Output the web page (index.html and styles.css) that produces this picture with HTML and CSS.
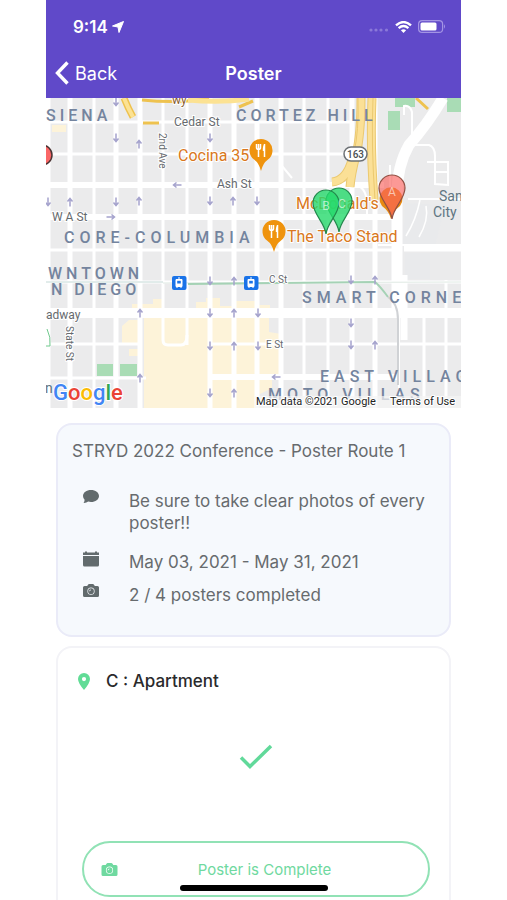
FILE: index.html
```html
<!DOCTYPE html>
<html lang="en">
<head>
<meta charset="utf-8">
<meta name="viewport" content="width=device-width, initial-scale=1">
<title>Poster</title>
<link rel="stylesheet" href="styles.css">
</head>
<body>
<svg class="defs" aria-hidden="true">
  <symbol id="camera" viewBox="0 0 16 13">
    <path fill="currentColor" fill-rule="evenodd" d="M1.5 2H4.2L5 .7Q5.4 0 6.200 0H9.800Q10.600 0 11 .7L11.800 2H14.500Q16 2 16 3.500V11.500Q16 13 14.500 13H1.500Q0 13 0 11.500V3.500Q0 2 1.500 2ZM8 3.600A3.600 3.600 0 1 0 8 10.800A3.600 3.600 0 1 0 8 3.600ZM8 4.300A2.900 2.900 0 1 1 8 10.100A2.900 2.900 0 1 1 8 4.300ZM8 5.400A1.800 1.800 0 0 0 6.200 7.200H7A1 1 0 0 1 8 6.200Z"/>
  </symbol>
</svg>
<div class="phone">
  <header class="top">
    <div class="status">
      <span class="time">9:14</span>
      <svg class="location" viewBox="0 0 12 12"><path d="M11.500.5 7 11.500 6 6 .5 5Z" fill="#fff" stroke="#fff" stroke-linejoin="round"/></svg>
      <span class="signals">
        <svg width="20" height="12" viewBox="0 0 20 12" fill="#8b79d9"><circle cx="2" cy="9" r="1.600"/><circle cx="7" cy="9" r="1.600"/><circle cx="12" cy="9" r="1.600"/><circle cx="17.500" cy="9" r="1.600"/></svg>
        <svg width="17" height="12" viewBox="0 0 17 12" fill="none" stroke="#fff" stroke-width="2.400"><path d="M1 4.400Q8.500-2.200 16 4.400M3.600 7.200Q8.500 3 13.400 7.200"/><path d="M8.500 12 5.900 9.200Q8.500 7.200 11.100 9.200Z" fill="#fff" stroke="none"/></svg>
        <svg width="28" height="13" viewBox="0 0 28 13"><rect x=".6" y=".6" width="24" height="11.800" rx="3.500" fill="none" stroke="#a394e4" stroke-width="1.200"/><rect x="2.500" y="2.500" width="16" height="8" rx="1.500" fill="#fff"/><path d="M26 4.300Q28 6.500 26 8.700Z" fill="#a394e4"/></svg>
      </span>
    </div>
    <nav class="bar">
      <a class="back" href="#"><svg width="14" height="24" viewBox="0 0 14 24"><path d="M12.500 1.500 2.500 12 12.500 22.500" fill="none" stroke="#fff" stroke-width="3.400"/></svg>Back</a>
      <h1>Poster</h1>
    </nav>
  </header>

  <svg class="map" viewBox="46 98 415 310" role="img" aria-label="Map of downtown San Diego">
    <defs>
      <path id="up" d="M0 4.500V-3M-2.500-.5 0-3.500 2.500-.5"/>
      <g id="food">
        <path d="M0 17Q-2 9-7 5.500A11.500 11.500 0 1 1 7 5.500Q2 9 0 17Z" fill="#ef930d"/>
        <path d="M-4.500-10V-6.500Q-4.500-4.500-2.500-4.500V3M-2.500-10V-5M-.5-10V-6.500Q-.5-4.500-2.500-4.500M3.500-10V3" fill="none" stroke="#fff" stroke-width="1.500"/>
        <path d="M3.500-10Q1.500-8 1.800-3H3.500Z" fill="#fff"/>
      </g>
      <path id="pin" d="M0 19C-1 8-13-1-13-12A13 13 0 1 1 13-12C13-1 1 8 0 19Z"/>
      <g id="tram">
        <rect x="-7" y="-7" width="14.500" height="14" rx="2" fill="#1a73e8"/>
        <path d="M-3-3.500H3V3.500H-3ZM-1-5H1M-2.500 5 -1 3.500M2.500 5 1 3.500" fill="#fff" stroke="#fff"/>
        <path d="M-1.800-2.200H1.800V.5H-1.800Z" fill="#1a73e8"/>
      </g>
    </defs>
    <rect x="46" y="98" width="415" height="310" fill="#ebebec"/>
    <g fill="#fdf3d9">
      <path d="M52 125H66V132H52ZM132 306V304H153V299H163V308H132ZM196 306V302H206V298H220V306H233V301H255V305H270V309H196ZM122 326 129 320H138V344H122ZM129 349H138V356H129ZM144 318H256V408H144ZM258 318H269V332L281 334V375H272V388L258 395Z"/>
      <path d="M164 309H187V340H164ZM187 349V390H190V408H150V349Z"/>
    </g>
    <g fill="#a9dcb5">
      <path d="M97 364H113V376H97ZM120 364H137V376H120ZM388 111H400V130H388ZM395 98H415V107H395ZM447 98H461V112H447Z"/>
    </g>
    <path d="M405 203 445 205 435 246H403ZM405 253H430V279H405Z" fill="#e9eaec"/>
    <g fill="none" stroke="#fff">
      <g stroke-width="5">
        <path d="M48 98V408M70 98V408M116 98V408M140 98V408M210 98V408M234 98V408M257 98V408M281 98V408M352 98V408M375 98V408"/>
      </g>
      <g stroke-width="3">
        <path d="M94 98V408M163 98V340M187 98V345M304 98V408M328 98V408M424 312V408M446 280V408M46 154H355M46 250H400M46 282H461M46 344H142M210 344H461M46 378H146M46 122H350"/>
      </g>
      <g stroke-width="6">
        <path d="M46 185H384M46 217H395M208 377H400"/>
      </g>
      <path d="M46 313H461" stroke-width="10"/>
      <path d="M404 248H461M404 275V340" stroke-width="7"/>
      <path d="M163 340Q163 345 168 345H181Q187 345 187 335" stroke-width="3"/>
      <path d="M443 98Q427 125 409 145Q397 166 397 195V310" stroke-width="11"/>
      <path d="M399 310V408M282 166 292 178M408 199H461M415 145H429Q435 147 435 156V184L448 185V162H427M435 172H448M404 115V106Q410 105 412 112V135M320 184H350Q367 184 367 205V217M390 165V188M378 245H461" stroke-width="2"/>
      <path d="M420 200Q416 220 406 236M426 206Q429 220 419 237" stroke-width="1.500"/>
    </g>
    <g fill="none" stroke="#ebc970" stroke-width="9">
      <path d="M361 98Q361 135 356 155T350 187M332 182Q346 181 352 160M372 98Q370 145 374 200"/>
    </g>
    <g fill="none" stroke="#fbe096" stroke-width="7">
      <path d="M361 98Q361 135 356 155T350 187M332 182Q346 181 352 160M372 98Q370 145 374 200"/>
    </g>
    <path d="M358 98Q359 132 354 152M373 98Q371 145 375 200" fill="none" stroke="#ebc970"/>
    <g fill="none" stroke="#eec24f">
      <path d="M124 98Q128 108 133 117" stroke-width="7"/>
      <path d="M124 98Q128 108 133 117" stroke="#fce293" stroke-width="4"/>
      <path d="M143 123H159M142 100Q180 104 209 98M239 107 253 101M416 98 428 109" stroke-width="3"/>
      <path d="M188 100Q220 103 249 99" stroke="#fce293" stroke-width="5"/>
    </g>
    <path d="M46 282H163" stroke="#c4d9d6"/>
    <path d="M163 283 461 282" stroke="#dfe9e3"/>
    <path d="M188 284 375 282Q380 286 388 297" fill="none" stroke="#a5d2b5" stroke-width="2"/>
    <path d="M388 297Q398 303 398 320V385" fill="none" stroke="#d0d2d5" stroke-width="2"/>
    <path d="M46 346H50Q51 337 47 329" fill="none" stroke="#70c98d"/>

    <g fill="none" stroke="#a5a3cd" stroke-width="1.500">
      <use href="#up" x="70" y="202"/><use href="#up" x="139" y="144"/><use href="#up" x="139" y="201"/><use href="#up" x="233" y="201"/>
      <use href="#up" x="140" y="313"/><use href="#up" x="140" y="378"/><use href="#up" x="234" y="281"/><use href="#up" x="234" y="313"/><use href="#up" x="234" y="346"/><use href="#up" x="234" y="393"/><use href="#up" x="375" y="280"/><use href="#up" x="375" y="345"/>
      <g transform="rotate(180)">
        <use href="#up" x="-48" y="-202"/><use href="#up" x="-116" y="-102"/><use href="#up" x="-116" y="-138"/><use href="#up" x="-116" y="-202"/><use href="#up" x="-210" y="-138"/><use href="#up" x="-210" y="-201"/><use href="#up" x="-257" y="-201"/><use href="#up" x="-210" y="-281"/><use href="#up" x="-210" y="-313"/><use href="#up" x="-210" y="-346"/><use href="#up" x="-210" y="-393"/><use href="#up" x="-258" y="-313"/><use href="#up" x="-258" y="-346"/><use href="#up" x="-351" y="-280"/><use href="#up" x="-351" y="-323"/><use href="#up" x="-351" y="-345"/>
      </g>
      <use href="#up" transform="translate(111 217) rotate(90)"/>
      <use href="#up" transform="translate(177 185) rotate(-90)"/>
      <use href="#up" transform="translate(276 377) rotate(-90)"/>
    </g>

    <g class="district">
      <text x="46" y="121">SIENA</text>
      <text x="236" y="121">CORTEZ HILL</text>
      <text class="wide" x="64" y="243">CORE-COLUMBIA</text>
      <text x="48" y="279">WNTOWN</text>
      <text x="51" y="295">N DIEGO</text>
      <text class="wide" x="302" y="303">SMART CORNE</text>
      <text class="wide" x="320" y="382">EAST VILLAG</text>
      <text class="wide" x="268" y="400">MOTO VILLAS</text>
    </g>
    <g class="street">
      <text x="174" y="126">Cedar St</text>
      <text x="217" y="188">Ash St</text>
      <text x="52" y="221">W A St</text>
      <text x="46" y="319">adway</text>
      <text x="172" y="104" class="highway">wy</text>
      <text class="small" x="269" y="283">C St</text>
      <text class="small" x="266" y="348">E St</text>
      <text class="small" transform="translate(159 133) rotate(90)">2nd Ave</text>
      <text class="small" transform="translate(66 326) rotate(90)">State St</text>
    </g>
    <g class="city"><text x="439" y="201">San</text><text x="433" y="217">City</text><text x="45" y="393">n</text></g>
    <g class="place">
      <text x="178" y="161">Cocina 35</text>
      <text x="296" y="209">McDonald's</text>
      <text x="287" y="242">The Taco Stand</text>
    </g>
    <rect x="344" y="147" width="23" height="14" rx="7" fill="#fff" stroke="#6c7074" stroke-width="1.500"/>
    <text class="shield" x="355.500" y="158">163</text>
    <use href="#tram" x="179" y="283"/><use href="#tram" x="251" y="283"/>
    <use href="#food" x="261" y="154"/>
    <use href="#food" x="274" y="235"/>
    <path d="M391 219Q389 211 382 206A11.500 11.500 0 1 1 400 206Q393 211 391 219Z" fill="#e88a10"/>
    <circle cx="42" cy="155" r="10" fill="#fa6767" stroke="#4b3434" stroke-width="1.500"/>
    <g stroke-width="1.200">
      <use href="#pin" x="339" y="213" fill="#25da6b" fill-opacity=".8" stroke="#22884c"/>
      <use href="#pin" x="326" y="215" fill="#25da6b" fill-opacity=".8" stroke="#22884c"/>
      <use href="#pin" x="392" y="200" fill="#fb625e" fill-opacity=".65" stroke="#925043"/>
    </g>
    <g class="pin-letter"><text x="326" y="210">B</text><text x="342" y="208">C</text><text x="392" y="196">A</text></g>
    <text class="google" x="53" y="400"><tspan fill="#4285f4">G</tspan><tspan fill="#ea4335">o</tspan><tspan fill="#fbbc05">o</tspan><tspan fill="#4285f4">g</tspan><tspan fill="#34a853">l</tspan><tspan fill="#ea4335">e</tspan></text>
    <rect x="255" y="396" width="206" height="12" fill="#f5f5f5" fill-opacity=".7"/>
    <text class="credit" x="256" y="405">Map data ©2021 Google</text>
    <text class="credit" x="390" y="405">Terms of Use</text>
  </svg>

  <main class="content">
    <section class="card summary">
      <h2>STRYD 2022 Conference - Poster Route 1</h2>
      <ul class="details">
        <li class="note">
          <svg width="16" height="14" viewBox="0 0 16 14" fill="currentColor"><path d="M8 0C12.500 0 16 2.600 16 6S12.500 12 8 12Q6.500 12 5.200 11.600Q3.500 13 1 13Q.4 12.900.8 12.400Q1.600 11.500 1.600 9.700Q0 8 0 6C0 2.600 3.500 0 8 0Z"/></svg>
          <span>Be sure to take clear photos of every poster!!</span>
        </li>
        <li>
          <svg width="16" height="16" viewBox="0 0 16 16" fill="currentColor"><path d="M0 1.500H2V.5H4V1.500H12V.5H14V1.500H16V4H0ZM0 5H16V14Q16 15.500 14.500 15.500H1.500Q0 15.500 0 14Z"/></svg>
          <span>May 03, 2021 - May 31, 2021</span>
        </li>
        <li>
          <svg width="16" height="13"><use href="#camera"/></svg>
          <span>2 / 4 posters completed</span>
        </li>
      </ul>
    </section>
    <section class="card stop">
      <h2><svg width="12" height="17" viewBox="0 0 12 17"><path d="M6 0A6 6 0 0 1 12 6Q12 10 6 17Q0 10 0 6A6 6 0 0 1 6 0ZM6 4A2.100 2.100 0 1 0 6 8.200A2.100 2.100 0 1 0 6 4Z" fill="#61dc96" fill-rule="evenodd"/></svg>C : Apartment</h2>
      <svg class="check" width="34" height="26" viewBox="0 0 34 26"><path d="M2 13.500 11 22.500 32 2" fill="none" stroke="#61d99a" stroke-width="3.500"/></svg>
      <button class="complete" type="button"><svg width="17" height="13"><use href="#camera"/></svg><span>Poster is Complete</span></button>
    </section>
  </main>
  <div class="home-indicator"></div>
</div>
</body>
</html>
```
FILE: styles.css
```css
* {
  box-sizing: border-box;
}

body {
  margin: 0;
  padding: 0 46px;
  background: #fff;
  font-family: Inter, "Liberation Sans", sans-serif;
}

h1, h2, ul {
  margin: 0;
  padding: 0;
}

svg {
  display: block;
  flex: none;
}

.defs {
  position: absolute;
  width: 0;
  height: 0;
}

.phone {
  position: relative;
  height: 100vh;
  overflow: hidden;
}

.top {
  background: #6049c9;
  color: #fff;
}

.status {
  display: flex;
  align-items: center;
  height: 48px;
  padding: 5px 15px 0 27px;
}

.time {
  font-size: 17px;
  font-weight: 600;
}

.location {
  width: 12px;
  height: 12px;
  margin-left: 4px;
}

.signals {
  display: flex;
  align-items: center;
  gap: 6px;
  margin-left: auto;
}

.bar {
  display: grid;
  grid-template-columns: 1fr auto 1fr;
  align-items: center;
  height: 50px;
  padding: 0 9px;
}

.back {
  display: flex;
  align-items: center;
  gap: 6px;
  color: #fff;
  font-size: 18px;
  text-decoration: none;
}

h1 {
  font-size: 18px;
  font-weight: 600;
}

.map {
  width: 100%;
  height: auto;
  font-family: Roboto, "Liberation Sans", sans-serif;
}

.district {
  fill: #74849e;
  font-size: 16px;
  font-weight: 500;
  letter-spacing: 4px;
}

.wide {
  letter-spacing: 5px;
}

.street {
  fill: #666a6e;
  font-size: 12px;
  stroke: #fff;
  stroke-width: 2px;
  paint-order: stroke;
}

.small {
  font-size: 10px;
}

.highway {
  fill: #885b2c;
}

.city {
  fill: #607581;
  font-size: 14px;
}

.place {
  fill: #d97720;
  font-size: 15px;
  stroke: #fff;
  stroke-width: 2px;
  paint-order: stroke;
}

.place {
  font-size: 16px;
}

.shield {
  fill: #4b4f53;
  font-size: 10px;
  font-weight: 500;
  text-anchor: middle;
}

.pin-letter {
  fill: #fff;
  fill-opacity: 0.6;
  font-size: 12px;
  text-anchor: middle;
}

.google {
  font-size: 22px;
  font-weight: 500;
  stroke: #fff;
  stroke-width: 2px;
  paint-order: stroke;
}

.credit {
  fill: #222;
  font-size: 11px;
  stroke: #fff;
  stroke-width: 2px;
  paint-order: stroke;
}

.content {
  display: grid;
  gap: 9px;
  padding: 15px 10px 0;
}

.card {
  border: 2px solid #f3f3f7;
  border-radius: 16px;
}

.summary {
  min-height: 214px;
  padding: 14px;
  background: #f6f9fd;
  border-color: #eaebf8;
  color: #676b6e;
}

.summary h2 {
  font-size: 17px;
  font-weight: 400;
  line-height: 24px;
}

.details {
  display: grid;
  gap: 11px;
  margin-top: 27px;
  list-style: none;
  font-size: 17px;
  line-height: 22px;
}

.details li {
  display: flex;
  gap: 30px;
  padding-left: 11px;
}

.details svg {
  color: #626b6d;
}

.note {
  padding-bottom: 6px;
}

.stop {
  padding: 22px 19px 22px 24px;
}

.stop h2 {
  display: flex;
  align-items: center;
  gap: 16px;
  margin-left: -4px;
  color: #2a2a2c;
  font-size: 17px;
  font-weight: 500;
  line-height: 22px;
}

.check {
  margin: 52px auto 71px;
}

.complete {
  display: grid;
  grid-template-columns: 17px 1fr;
  align-items: center;
  width: 100%;
  height: 56px;
  padding: 0 17px;
  background: #fff;
  border: 2px solid #91e2b5;
  border-radius: 28px;
  color: #6fd9a0;
  font: inherit;
  font-size: 15px;
}

.home-indicator {
  position: absolute;
  bottom: 9px;
  left: 50%;
  width: 148px;
  height: 6px;
  margin-left: -74px;
  background: #000;
  border-radius: 3px;
}
```
